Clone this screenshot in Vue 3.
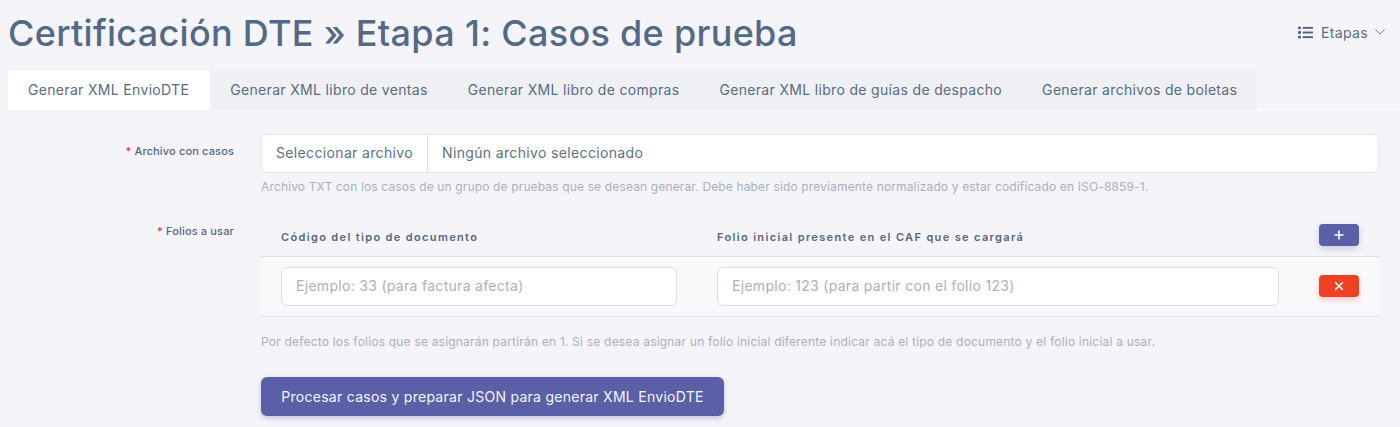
<template>
  <div class="page">
    <header class="head">
      <h1>Certificación DTE » Etapa 1: Casos de prueba</h1>
      <button class="stages" type="button">
        <svg class="list-icon" viewBox="0 0 16 14" width="15" height="13" fill="currentColor">
          <rect x="0" y="0.5" width="3" height="3" rx="0.8" />
          <rect x="0" y="5.5" width="3" height="3" rx="0.8" />
          <rect x="0" y="10.5" width="3" height="3" rx="0.8" />
          <rect x="5" y="1" width="11" height="2" />
          <rect x="5" y="6" width="11" height="2" />
          <rect x="5" y="11" width="11" height="2" />
        </svg>
        <span>Etapas</span>
        <svg class="caret" viewBox="0 0 10 6" width="10" height="6" fill="none" stroke="currentColor" stroke-width="1">
          <path d="M0.5 0.5 5 5 9.5 0.5" />
        </svg>
      </button>
    </header>

    <nav class="tabs">
      <a v-for="(tab, i) in tabs" :key="tab" class="tab" :class="{ active: i === 0 }">{{ tab }}</a>
    </nav>

    <form class="form" @submit.prevent>
      <div class="row">
        <label class="label"><em>*</em> Archivo con casos</label>
        <div class="control">
          <div class="file">
            <span class="file-btn">Seleccionar archivo</span>
            <span class="file-name">Ningún archivo seleccionado</span>
          </div>
          <p class="hint first">Archivo TXT con los casos de un grupo de pruebas que se desean generar. Debe haber sido previamente normalizado y estar codificado en ISO-8859-1.</p>
        </div>
      </div>

      <div class="row second">
        <label class="label"><em>*</em> Folios a usar</label>
        <div class="control">
          <div class="table">
            <div class="thead">
              <div class="th c1">Código del tipo de documento</div>
              <div class="th c2">Folio inicial presente en el CAF que se cargará</div>
              <div class="c3">
                <button class="mini add" type="button">
                  <svg viewBox="0 0 10 10" width="10" height="10" stroke="currentColor" stroke-width="1.6">
                    <path d="M5 0.5V9.5M0.5 5H9.5" />
                  </svg>
                </button>
              </div>
            </div>
            <div class="tbody">
              <div class="c1"><input placeholder="Ejemplo: 33 (para factura afecta)" /></div>
              <div class="c2"><input placeholder="Ejemplo: 123 (para partir con el folio 123)" /></div>
              <div class="c3">
                <button class="mini del" type="button">
                  <svg viewBox="0 0 10 10" width="10" height="10" stroke="currentColor" stroke-width="1.6">
                    <path d="M1.2 1.2 8.8 8.8M8.8 1.2 1.2 8.8" />
                  </svg>
                </button>
              </div>
            </div>
          </div>
          <p class="hint">Por defecto los folios que se asignarán partirán en 1. Si se desea asignar un folio inicial diferente indicar acá el tipo de documento y el folio inicial a usar.</p>
          <button class="submit" type="submit">Procesar casos y preparar JSON para generar XML EnvioDTE</button>
        </div>
      </div>
    </form>
  </div>
</template>

<script setup>
const tabs = [
  'Generar XML EnvioDTE',
  'Generar XML libro de ventas',
  'Generar XML libro de compras',
  'Generar XML libro de guías de despacho',
  'Generar archivos de boletas'
]
</script>

<style>
html, body {
  background: #f4f4f9;
}
</style>

<style scoped>
.page {
  height: 427px;
  overflow: hidden;
  font-family: Inter, "Liberation Sans", sans-serif;
  color: #4c5f7a;
  background: #f4f4f9;
}
.head {
  display: flex;
  justify-content: space-between;
  padding: 11px 15px 0 8px;
  height: 71px;
  box-sizing: border-box;
}
h1 {
  margin: 0;
  font-size: 36px;
  line-height: 44px;
  font-weight: 500;
  letter-spacing: 0.3px;
  color: #536a86;
}
.stages {
  display: flex;
  align-items: center;
  gap: 8px;
  height: 20px;
  margin-top: 11px;
  padding: 0;
  border: 0;
  background: none;
  color: #5a6c86;
  font: 14px Inter, sans-serif;
  letter-spacing: 0.35px;
}
.list-icon {
  color: #4f6280;
}
.caret {
  margin-left: -1px;
  color: #6b7c93;
}
.tabs {
  display: flex;
  margin-left: 8px;
  height: 39px;
  box-sizing: border-box;
  border-bottom: 1px solid #fff;
}
.tab {
  padding: 0 20px;
  line-height: 38px;
  height: 39px;
  flex-shrink: 0;
  font-size: 14px;
  letter-spacing: 0.325px;
  white-space: nowrap;
  color: #5a6b82;
  background: #eef0f4;
}
.tab.active {
  padding-right: 21px;
  background: #fff;
}
.form {
  padding: 24px 21px 0 0;
}
.row {
  display: grid;
  grid-template-columns: 234px 1118px;
  column-gap: 27px;
}
.second {
  margin-top: 22px;
}
.label {
  text-align: right;
  font-size: 11px;
  font-weight: 500;
  letter-spacing: 0.15px;
  line-height: 34px;
  color: #56677f;
}
.label em {
  color: #ee2a2a;
  font-style: normal;
}
.second .label {
  line-height: 16px;
  padding-top: 6px;
}
.file {
  display: flex;
  height: 39px;
  box-sizing: border-box;
  border: 1px solid #e6e7ec;
  border-radius: 6px;
  background: #fff;
  font-size: 14px;
  letter-spacing: 0.35px;
  line-height: 36px;
}
.file-btn {
  padding: 0 14px;
  border-right: 1px solid #dfe0e6;
  color: #5f6f85;
}
.file-name {
  padding: 0 14px;
  color: #5f6f85;
}
.hint {
  margin: 0;
  padding-top: 17px;
  font-size: 12px;
  letter-spacing: 0.2px;
  line-height: 16px;
  color: #a9b1bd;
}
.hint.first {
  padding-top: 6px;
  letter-spacing: 0.145px;
}
.thead, .tbody {
  display: grid;
  grid-template-columns: 436px 602px 80px;
  align-items: center;
}
.thead {
  height: 40px;
  box-sizing: border-box;
  border-bottom: 1px solid #e0e1e6;
}
.tbody {
  height: 60px;
  box-sizing: border-box;
  background: #f9f9fc;
  border-bottom: 1px solid #e0e1e6;
}
.c1, .c2, .c3 {
  padding: 0 20px;
}
.th {
  font-size: 11px;
  font-weight: 600;
  letter-spacing: 1.35px;
  color: #56677f;
}
input {
  width: 100%;
  height: 39px;
  box-sizing: border-box;
  padding: 0 14px 2px;
  border: 1px solid #dedfe5;
  border-radius: 6px;
  background: #fff;
  font: 14px Inter, sans-serif;
  letter-spacing: 0.3px;
}
input::placeholder {
  color: #a9b1bd;
  opacity: 1;
}
.mini {
  display: flex;
  align-items: center;
  justify-content: center;
  width: 40px;
  height: 22px;
  padding: 0;
  border: 0;
  border-radius: 4px;
  color: #fff;
}
.add {
  margin-bottom: 4px;
  background: #5a5fa8;
  box-shadow: 0 3px 6px rgba(90, 95, 168, 0.25);
}
.del {
  margin-bottom: 2px;
  background: #ee4023;
  box-shadow: 0 3px 6px rgba(238, 64, 35, 0.25);
}
.submit {
  display: block;
  margin-top: 27px;
  width: 463px;
  height: 39px;
  padding: 0;
  border: 0;
  border-radius: 6px;
  background: #5a5fa8;
  box-shadow: 0 2px 5px rgba(90, 95, 168, 0.35);
  color: #f6f6fc;
  font: 14px Inter, sans-serif;
  letter-spacing: 0.27px;
}
</style>
